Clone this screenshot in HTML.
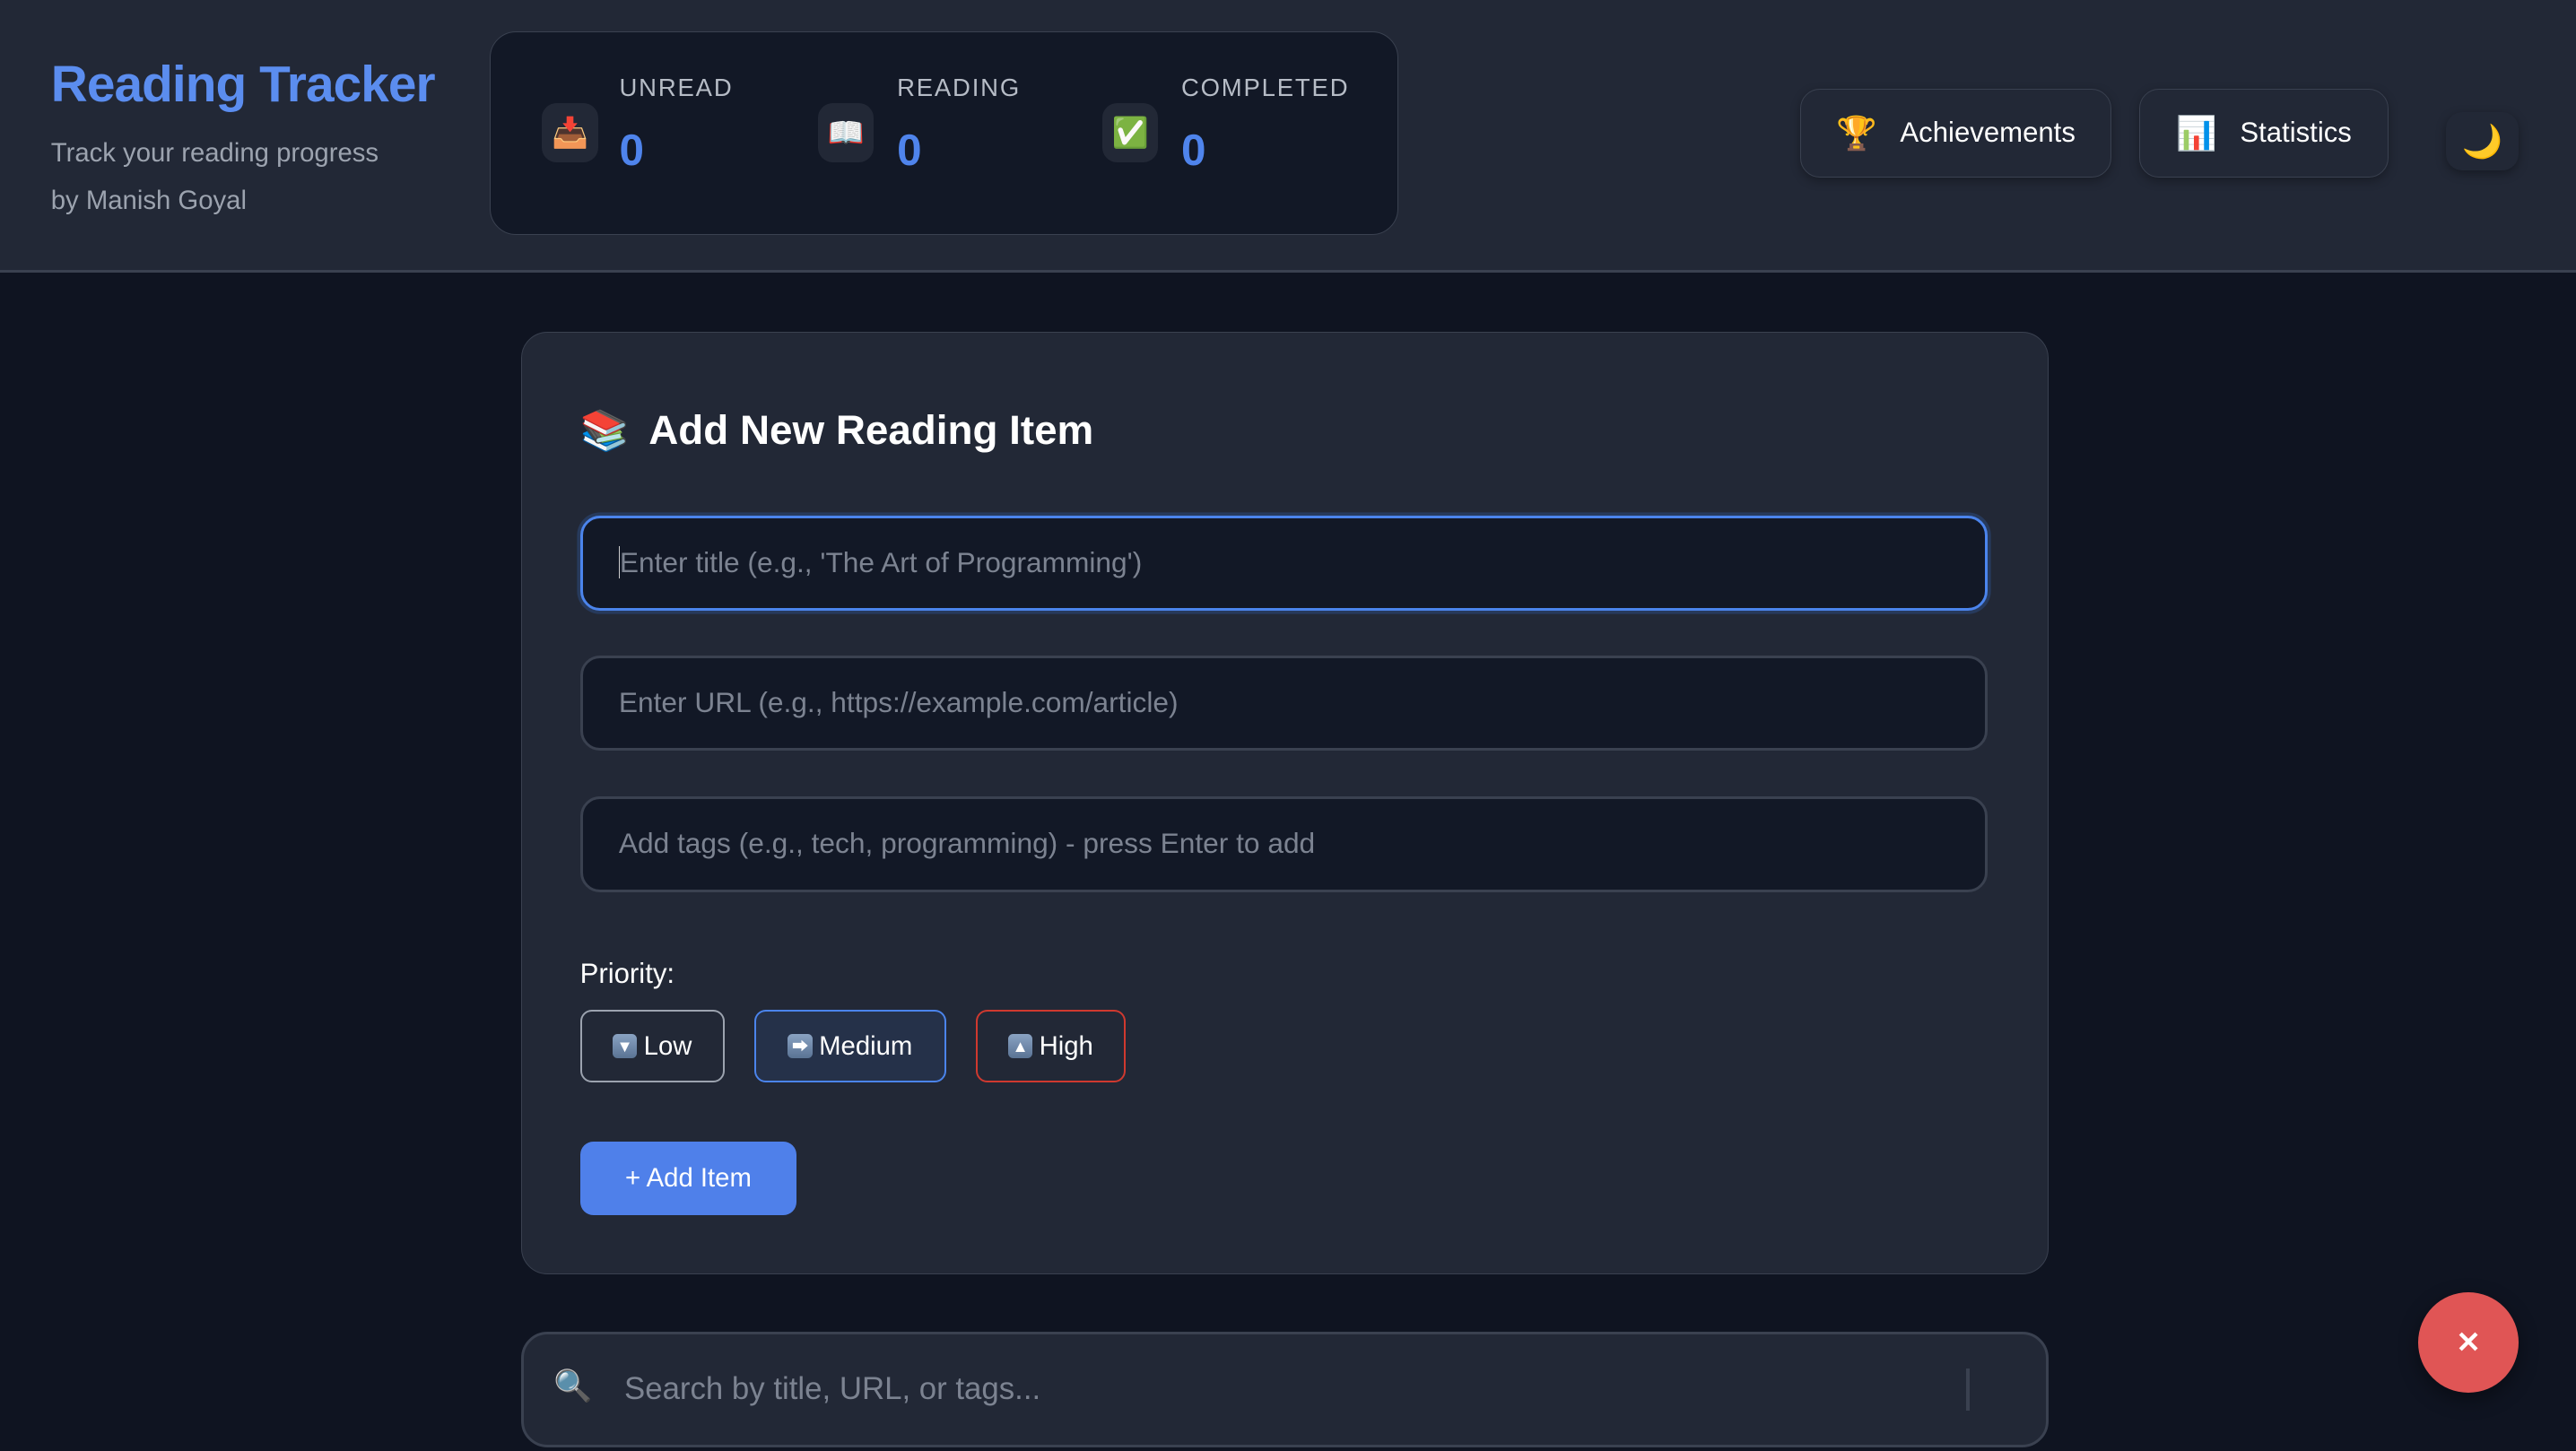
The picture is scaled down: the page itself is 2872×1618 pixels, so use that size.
<!DOCTYPE html>
<html><head><meta charset="utf-8"><style>
*{box-sizing:border-box;margin:0;padding:0}
html,body{width:2872px;height:1618px;overflow:hidden;background:#0f1420}
#w{zoom:1.83163;width:1568px;height:884px;position:relative;font-family:"Liberation Sans","Noto Sans CJK JP",sans-serif;background:#0f1421;color:#fff}
.a{position:absolute}
header{position:absolute;left:0;top:0;width:1568px;height:166px;background:#222836;border-bottom:2px solid #3a4150}
.ib{position:absolute;width:34px;height:36px;background:#222836;border-radius:9px;font-size:18px;text-align:center;line-height:36px}
.lbl{position:absolute;font-size:15px;letter-spacing:1px;color:#b6bcc6}
.val{position:absolute;font-size:27px;color:#4f84ec;font-weight:600}
.btn{position:absolute;border:1px solid #3a4150;border-radius:12px;background:#222836;font-size:17px;display:flex;align-items:center;justify-content:center;gap:14px;box-shadow:0 2px 6px rgba(0,0,0,.3)}
.inp{position:absolute;left:353px;width:857px;height:58px;background:#121826;border:2px solid #3a4150;border-radius:12px;font-size:17.3px;color:#7c8391;padding-left:22px;line-height:54px}
.pb{position:absolute;top:615px;height:44px;border-radius:7px;font-size:16px;display:flex;align-items:center;justify-content:center;gap:4px}
.em{display:inline-block;width:15px;height:15px;border-radius:3px;background:linear-gradient(#8aa3c3,#5a7394);color:#fff;font-size:10px;line-height:15px;text-align:center}
</style></head><body><div id="w">
<header>
<div class="a" style="left:31px;top:34px;font-size:31px;font-weight:bold;color:#5b8def;letter-spacing:-0.5px">Reading Tracker</div>
<div class="a" style="left:31px;top:84px;font-size:16px;color:#9ca3af">Track your reading progress</div>
<div class="a" style="left:31px;top:113px;font-size:16px;color:#9ca3af">by Manish Goyal</div>
<div class="a" style="left:298px;top:19px;width:553px;height:124px;background:#121826;border:1px solid #3a4150;border-radius:16px"></div>
<div class="ib" style="left:330px;top:63px">📥</div><div class="lbl" style="left:377px;top:45px">UNREAD</div><div class="val" style="left:377px;top:76px">0</div>
<div class="ib" style="left:498px;top:63px">📖</div><div class="lbl" style="left:546px;top:45px">READING</div><div class="val" style="left:546px;top:76px">0</div>
<div class="ib" style="left:671px;top:63px">✅</div><div class="lbl" style="left:719px;top:45px">COMPLETED</div><div class="val" style="left:719px;top:76px">0</div>
<div class="btn" style="left:1096px;top:54px;width:189px;height:54px"><span style="font-size:20px">🏆</span>Achievements</div>
<div class="btn" style="left:1302px;top:54px;width:152px;height:54px"><span style="font-size:20px">📊</span>Statistics</div>
<div class="a" style="left:1489px;top:68px;width:44px;height:36px;border-radius:10px;background:#222836;box-shadow:0 2px 6px rgba(0,0,0,.35);text-align:center;line-height:36px;font-size:20px;color:#e3c565">🌙</div>
</header>
<div class="a" style="left:317px;top:202px;width:930px;height:574px;background:#222836;border:1px solid #3a4150;border-radius:16px"></div>
<div class="a" style="left:353px;top:248px;font-size:25px;font-weight:bold"><span style="font-size:24px;margin-right:12px">📚</span>Add New Reading Item</div>
<div class="inp" style="top:314px;border-color:#4b84ec;box-shadow:0 0 0 2px rgba(59,130,246,.2)"><span style="border-left:1px solid #ccc;margin-left:0"></span>Enter title (e.g., 'The Art of Programming')</div>
<div class="inp" style="top:399px">Enter URL (e.g., https://example.com/article)</div>
<div class="inp" style="top:485px">Add tags (e.g., tech, programming) - press Enter to add</div>
<div class="a" style="left:353px;top:583px;font-size:17px">Priority:</div>
<div class="pb" style="left:353px;width:88px;border:1.5px solid #9ca3af"><span class="em">▼</span>Low</div>
<div class="pb" style="left:459px;width:117px;border:1.5px solid #4b84ec;background:#253149"><span class="em">➡</span>Medium</div>
<div class="pb" style="left:594px;width:91px;border:1.5px solid #d0392f"><span class="em">▲</span>High</div>
<div class="a" style="left:353px;top:695px;width:132px;height:45px;background:#4f80ea;border-radius:8px;font-size:16px;text-align:center;line-height:45px">+ Add Item</div>
<div class="a" style="left:317px;top:811px;width:930px;height:70px;background:#222836;border:2px solid #3a4150;border-radius:16px"></div>
<div class="a" style="left:337px;top:833px;font-size:19px">🔍</div>
<div class="a" style="left:380px;top:835px;font-size:19px;color:#7c8391">Search by title, URL, or tags...</div>
<div class="a" style="left:1197px;top:833px;width:2px;height:26px;background:#3a4150"></div>
<div class="a" style="left:1472px;top:787px;width:61px;height:61px;border-radius:50%;background:#e05555;box-shadow:0 4px 12px rgba(0,0,0,.4);text-align:center;line-height:61px;font-size:18px;font-weight:bold">✕</div>
</div></body></html>
